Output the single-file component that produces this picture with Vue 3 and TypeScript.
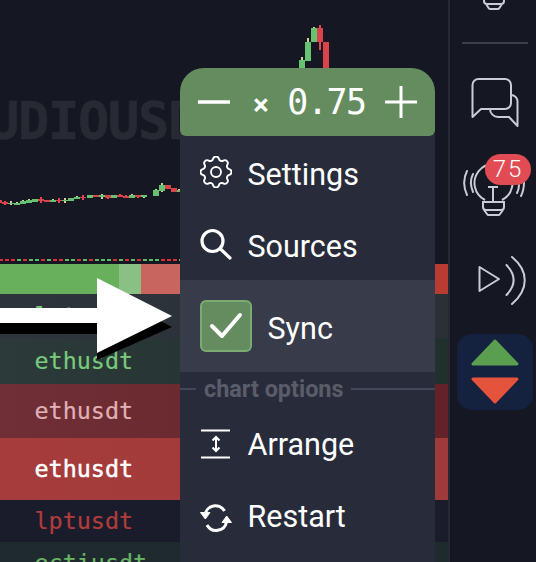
<script setup lang="ts">
// x, width, body top, body bottom, wick top, wick bottom, colour
type Candle = [number, number, number, number, number, number, "g" | "r"];

const candles: Candle[] = [
  [0, 2, 200, 203, 200, 203, "r"],
  [2, 6, 202, 204, 201, 205, "r"],
  [8, 6, 203, 204, 201, 205, "g"],
  [14, 6, 203, 205, 202, 205, "g"],
  [20, 6, 201, 204, 200, 204, "g"],
  [26, 6, 200, 203, 199, 203, "g"],
  [32, 6, 199, 202, 199, 202, "g"],
  [38, 6, 199, 201, 197, 203, "r"],
  [44, 6, 200, 202, 200, 202, "r"],
  [50, 6, 200, 202, 199, 202, "g"],
  [56, 6, 200, 201, 198, 203, "r"],
  [62, 6, 200, 201, 198, 203, "g"],
  [68, 6, 198, 201, 198, 201, "g"],
  [74, 6, 197, 199, 196, 199, "g"],
  [80, 6, 197, 198, 195, 200, "r"],
  [87, 6, 195, 198, 195, 198, "g"],
  [93, 6, 195, 197, 195, 197, "r"],
  [99, 6, 195, 197, 194, 199, "g"],
  [105, 6, 195, 198, 195, 199, "r"],
  [111, 6, 195, 198, 195, 198, "g"],
  [117, 6, 195, 197, 194, 197, "r"],
  [123, 6, 196, 198, 195, 198, "r"],
  [129, 6, 195, 198, 194, 198, "g"],
  [135, 6, 195, 197, 195, 198, "r"],
  [141, 6, 195, 197, 195, 198, "g"],
  [153, 6, 190, 196, 189, 196, "g"],
  [159, 6, 185, 191, 183, 192, "g"],
  [165, 6, 185, 189, 185, 189, "r"],
  [171, 6, 188, 192, 188, 192, "r"],
  [177, 4, 190, 192, 189, 192, "g"],
  [299, 6, 60, 70, 57, 70, "g"],
  [305, 6, 42, 61, 38, 48, "g"],
  [311, 6, 28, 42, 27, 42, "g"],
  [317, 6, 28, 42, 25, 50, "r"],
  [323, 6, 42, 70, 42, 70, "r"],
];

const dashes = "rrrgrggrgrrggrgrgggrgrgrgggrrrgrgggrgrgg".split("");

const rows = [
  { name: "lptusdt", kind: "row-a" },
  { name: "ethusdt", kind: "row-b" },
  { name: "ethusdt", kind: "row-c" },
  { name: "ethusdt", kind: "row-d" },
  { name: "lptusdt", kind: "row-e" },
  { name: "ectiusdt", kind: "row-f" },
];
</script>

<template>
  <div class="app">
    <main class="main">
      <section class="chart">
        <div class="watermark">AUDIOUSDT</div>
        <svg class="candles" width="448" height="264" viewBox="0 0 448 264">
          <g v-for="c in candles" :key="c[0]">
            <rect
              :x="c[0] + c[1] / 2 - 1"
              :y="c[4]"
              width="2"
              :height="c[5] - c[4]"
              :fill="c[6] === 'g' ? '#d6cf94' : '#e0484f'"
            />
            <rect
              :x="c[0]"
              :y="c[2]"
              :width="c[1]"
              :height="c[3] - c[2]"
              :fill="c[6] === 'g' ? '#66c270' : '#d9444c'"
            />
          </g>
          <rect
            v-for="(d, i) in dashes"
            :key="i"
            :x="i * 6 - 1"
            y="259"
            width="4"
            height="2"
            :fill="d === 'g' ? '#5fbb6c' : '#d92e3a'"
          />
        </svg>
      </section>

      <div class="bar">
        <span class="bar-buy"></span>
        <span class="bar-mid"></span>
        <span class="bar-sell"></span>
        <span class="bar-end"></span>
      </div>

      <div v-for="(row, i) in rows" :key="i" class="row" :class="row.kind">
        {{ row.name }}
      </div>
    </main>

    <aside class="sidebar">
      <svg class="stub" width="24" height="10" viewBox="0 0 24 10" fill="none">
        <path d="M2 0v1a3 3 0 0 0 3 3h14a3 3 0 0 0 3-3V0M4 4l3 4.500a2 2 0 0 0 1.500.5h7a2 2 0 0 0 1.500-.5L20 4" stroke="#c8ccd4" stroke-width="2" />
      </svg>
      <div class="side-line"></div>

      <svg class="chat" width="48" height="50" viewBox="0 0 48 50" fill="none" stroke="#c8ccd4" stroke-width="2">
        <path d="M1.500 39V7a6 6 0 0 1 6-6H34a6 6 0 0 1 6 6v18a6 6 0 0 1-6 6H10z" stroke-linejoin="round" />
        <path d="M40 17a6.500 6.500 0 0 1 6.500 6.500V48L38 39H27a8 8 0 0 1-8-8" stroke-linejoin="round" />
      </svg>

      <div class="bulb">
        <svg width="72" height="64" viewBox="0 0 72 64" fill="none" stroke="#c8ccd4" stroke-width="2">
          <path d="M26 46a19 19 0 1 1 17 0" />
          <path d="M34 33v15M29 33h10" />
          <path d="M24 48h21v5a3 3 0 0 1-3 3H27a3 3 0 0 1-3-3z" />
          <path d="M25 56l3 4a2 2 0 0 0 2 1h9a2 2 0 0 0 2-1l3-4" />
          <path d="M8 17c-4 8-4 15 0 24M14 20c-3 6-3 11 0 18" stroke-linecap="round" />
          <path d="M60 31c0 3-.5 5-2 8M65 28c0 6-1 10-3 14" stroke-linecap="round" />
        </svg>
        <span class="badge">75</span>
      </div>

      <svg class="play" width="56" height="50" viewBox="0 0 56 50" fill="none" stroke="#c8ccd4" stroke-width="2" stroke-linecap="round" stroke-linejoin="round">
        <path d="M7.500 11v24L27 23z" />
        <path d="M34.500 9C44 19 44 29 34.500 39" />
        <path d="M40 1C57 15 57 33 40 48" />
      </svg>

      <div class="tile">
        <svg width="76" height="76" viewBox="0 0 76 76">
          <path d="M38 7L60 30H16z" fill="#5a9f50" stroke="#5a9f50" stroke-width="3" stroke-linejoin="round" />
          <path d="M16 45H60L38 68z" fill="#e5533d" stroke="#e5533d" stroke-width="3" stroke-linejoin="round" />
        </svg>
      </div>
    </aside>

    <nav class="menu">
      <div class="zoom">
        <svg width="32" height="32" viewBox="0 0 32 32"><path d="M0 16h32" stroke="#fff" stroke-width="3.500" stroke-linecap="round" /></svg>
        <span class="zoom-value"><small>×</small> 0.75</span>
        <svg width="32" height="32" viewBox="0 0 32 32"><path d="M0 16h32M16 0v32" stroke="#fff" stroke-width="3" stroke-linecap="round" /></svg>
      </div>

      <div class="item">
        <svg width="32" height="32" viewBox="2.700 2.700 18.600 18.600" fill="none" stroke="#fff" stroke-width="1.100" stroke-linejoin="round">
          <path d="M10.325 4.317c.426-1.756 2.924-1.756 3.350 0a1.724 1.724 0 0 0 2.573 1.066c1.543-.94 3.310.826 2.370 2.370a1.724 1.724 0 0 0 1.065 2.572c1.756.426 1.756 2.924 0 3.350a1.724 1.724 0 0 0-1.066 2.573c.94 1.543-.826 3.310-2.370 2.370a1.724 1.724 0 0 0-2.572 1.065c-.426 1.756-2.924 1.756-3.350 0a1.724 1.724 0 0 0-2.573-1.066c-1.543.94-3.310-.826-2.370-2.370a1.724 1.724 0 0 0-1.065-2.572c-1.756-.426-1.756-2.924 0-3.350a1.724 1.724 0 0 0 1.066-2.573c-.94-1.543.826-3.310 2.370-2.370c1 .608 2.296.07 2.572-1.065z" />
          <circle cx="12" cy="12" r="2.900" />
        </svg>
        <span class="label-low">Settings</span>
      </div>

      <div class="item">
        <svg width="32" height="32" viewBox="0 0 32 32" fill="none" stroke="#fff" stroke-width="3.200" stroke-linecap="round">
          <circle cx="12.500" cy="13" r="10.500" />
          <path d="M20.500 21l9.500 9" />
        </svg>
        <span class="label-low">Sources</span>
      </div>

      <div class="item item-sync">
        <span class="check">
          <svg width="34" height="28" viewBox="0 0 34 28" fill="none" stroke="#fff" stroke-width="4" stroke-linecap="round" stroke-linejoin="round">
            <path d="M3 14l10 10L31 3" />
          </svg>
        </span>
        <span class="label-low">Sync</span>
      </div>

      <div class="section"><span>chart options</span></div>

      <div class="item">
        <svg width="32" height="32" viewBox="0 0 32 32" fill="none" stroke="#fff" stroke-width="2">
          <path d="M1 2.500h29M1 29.500h29" />
          <path d="M16 9v14M12.500 12.500L16 9l3.500 3.500M12.500 19.500L16 23l3.500-3.500" />
        </svg>
        <span>Arrange</span>
      </div>

      <div class="item">
        <svg width="32" height="32" viewBox="0 -2 32 32" fill="none" stroke="#fff" stroke-width="3" stroke-linejoin="round">
          <path d="M5 13a10.500 10.500 0 0 1 19.500-4" />
          <path d="M26.500 20a10.500 10.500 0 0 1-19.500 3" />
          <path d="M0.500 10.500h9.500l-4.700 6.500zM31.500 20.500h-9.500l4.700-6.500z" fill="#fff" stroke-width="1" />
        </svg>
        <span>Restart</span>
      </div>
    </nav>

    <svg class="pointer" width="176" height="90" viewBox="0 0 176 90">
      <path d="M0 30H97V10L172 49L97 82V56H0z" fill="#000" />
      <path d="M0 30H97V0L172 38L97 75V45H0z" fill="#fff" />
    </svg>
  </div>
</template>

<style scoped>
.app {
  position: relative;
  display: flex;
  width: 536px;
  height: 562px;
  overflow: hidden;
  background: #151823;
  font-family: Roboto, "Liberation Sans", sans-serif;
}

.main {
  width: 448px;
  flex: none;
  border-right: 2px solid #272a36;
  overflow: hidden;
}

.chart {
  position: relative;
  height: 264px;
  overflow: hidden;
}

.candles {
  position: relative;
  display: block;
}

.watermark {
  position: absolute;
  left: -42px;
  top: 91px;
  font: bold 52px/60px "DejaVu Sans Mono", monospace;
  letter-spacing: -1.300px;
  -webkit-text-stroke: 0.6px #282a33;
  color: #282a33;
  white-space: nowrap;
}

.bar {
  display: flex;
  height: 30px;
}

.bar-buy {
  width: 119px;
  background: #68b05c;
}

.bar-mid {
  width: 22px;
  background: #8ac084;
}

.bar-sell {
  flex: 1;
  background: #c9655f;
}

.bar-end {
  width: 13px;
  background: #b83c32;
}

.row {
  display: flex;
  align-items: center;
  padding-left: 34.500px;
  font: 23.400px "DejaVu Sans Mono", monospace;
  -webkit-text-stroke: 0.2px currentColor;
}

.row-a {
  height: 44px;
  color: #78c97c;
  background: linear-gradient(90deg, #2d343b, #2a3036);
}

.row-b {
  height: 46px;
  color: #78c97c;
  background: linear-gradient(90deg, #2c3a3a, #20302d);
}

.row-c {
  height: 54px;
  color: #e0b0b5;
  background: linear-gradient(90deg, #702f36, #642228);
}

.row-d {
  height: 62px;
  color: #fff;
  -webkit-text-stroke: 0.5px #fff;
  background: linear-gradient(90deg, #a63c3c, #a03a3a);
}

.row-e {
  height: 42px;
  color: #b03c3c;
  background: #1a1c2b;
}

.row-f {
  height: 20px;
  align-items: flex-start;
  padding-top: 7px;
  color: #69b565;
  background: #1f2a2f;
}

.sidebar {
  flex: 1;
  display: flex;
  flex-direction: column;
  align-items: center;
  padding-left: 4px;
}

.stub {
  flex: none;
  margin-left: -2px;
}

.side-line {
  flex: none;
  width: 66px;
  height: 2px;
  margin-top: 32px;
  background: #3b3e4b;
}

.chat {
  flex: none;
  margin-top: 34px;
}

.bulb {
  position: relative;
  flex: none;
  width: 72px;
  height: 64px;
  margin-top: 26px;
}

.bulb svg {
  display: block;
}

.badge {
  position: absolute;
  left: 26px;
  top: 0;
  width: 46px;
  height: 31px;
  border-radius: 16px;
  background: #e14b53;
  color: #fff;
  font-size: 24px;
  font-weight: 300;
  line-height: 31px;
  letter-spacing: 2px;
  text-align: center;
}

.play {
  flex: none;
  margin-top: 38px;
  margin-left: 10px;
}

.tile {
  flex: none;
  width: 76px;
  height: 76px;
  margin-top: 28px;
  border-radius: 15px;
  background: #14213f;
}

.tile svg {
  display: block;
}

.menu {
  position: absolute;
  left: 180px;
  top: 68px;
  width: 255px;
  height: 494px;
  border-radius: 24px 24px 0 0;
  background: #282c3a;
  color: #fff;
  font-size: 30.500px;
}

.zoom {
  display: flex;
  align-items: center;
  justify-content: space-between;
  height: 68px;
  padding: 0 18px;
  border-radius: 24px 24px 6px 6px;
  background: #648c5f;
}

.zoom-value {
  margin-left: 3px;
  font: 35px "DejaVu Sans Mono", monospace;
  letter-spacing: -1.500px;
  white-space: nowrap;
}

.zoom-value small {
  font-size: 28px;
  font-weight: bold;
}

.item {
  display: flex;
  align-items: center;
  gap: 15.500px;
  height: 72px;
  padding-left: 20px;
}

.item svg {
  flex: none;
}

.label-low {
  margin-top: 4px;
}

.item-sync {
  height: 92px;
  background: #383b4a;
}

.check {
  display: flex;
  align-items: center;
  justify-content: center;
  width: 52px;
  height: 52px;
  box-sizing: border-box;
  border: 2px solid #7cab72;
  border-radius: 6px;
  background: #648c5f;
}

.section {
  display: flex;
  align-items: center;
  gap: 8px;
  box-sizing: border-box;
  height: 36px;
  padding-bottom: 2px;
  color: #5a5d69;
  font-size: 23.400px;
  font-weight: bold;
}

.section::before {
  content: "";
  width: 16px;
  height: 2px;
  background: #44475a;
}

.section::after {
  content: "";
  flex: 1;
  height: 2px;
  background: #44475a;
}

.pointer {
  position: absolute;
  left: 0;
  top: 278px;
}
</style>

<style>
html,
body {
  margin: 0;
  background: #151823;
}
</style>
